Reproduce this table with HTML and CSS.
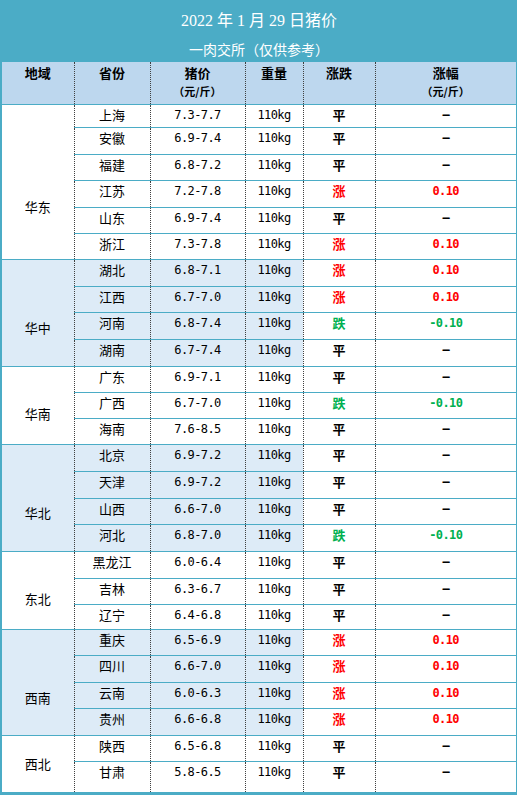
FILE: index.html
```html
<!DOCTYPE html>
<html lang="zh-CN">
<head>
<meta charset="utf-8">
<title>2022年1月29日猪价</title>
<link rel="stylesheet" href="styles.css">
</head>
<body>
<div class="sheet">
  <div class="title">
    <div class="t1">2022 年 1 月 29 日猪价</div>
    <div class="t2">一肉交所（仅供参考）</div>
  </div>
  <table class="grid">
    <colgroup>
      <col class="c-region"><col class="c-prov"><col class="c-price"><col class="c-weight"><col class="c-trend"><col class="c-change">
    </colgroup>
    <thead>
      <tr class="head">
        <th>地域</th>
        <th>省份</th>
        <th>猪价<span class="unit">（元/斤）</span></th>
        <th>重量</th>
        <th>涨跌</th>
        <th>涨幅<span class="unit">（元/斤）</span></th>
      </tr>
    </thead>
    <tbody>
      <tr class="h23">
        <td class="region g6" rowspan="6">华东</td>
        <td class="prov">上海</td><td class="num">7.3-7.7</td><td class="num">110kg</td><td class="trend">平</td><td class="chg">–</td>
      </tr>
      <tr class="h27"><td class="prov">安徽</td><td class="num">6.9-7.4</td><td class="num">110kg</td><td class="trend">平</td><td class="chg">–</td></tr>
      <tr class="h26"><td class="prov">福建</td><td class="num">6.8-7.2</td><td class="num">110kg</td><td class="trend">平</td><td class="chg">–</td></tr>
      <tr class="h27"><td class="prov">江苏</td><td class="num">7.2-7.8</td><td class="num">110kg</td><td class="trend up">涨</td><td class="chg up">0.10</td></tr>
      <tr class="h26"><td class="prov">山东</td><td class="num">6.9-7.4</td><td class="num">110kg</td><td class="trend">平</td><td class="chg">–</td></tr>
      <tr class="h26"><td class="prov">浙江</td><td class="num">7.3-7.8</td><td class="num">110kg</td><td class="trend up">涨</td><td class="chg up">0.10</td></tr>

      <tr class="h27 alt">
        <td class="region g4" rowspan="4">华中</td>
        <td class="prov">湖北</td><td class="num">6.8-7.1</td><td class="num">110kg</td><td class="trend up">涨</td><td class="chg up">0.10</td>
      </tr>
      <tr class="h26 alt"><td class="prov">江西</td><td class="num">6.7-7.0</td><td class="num">110kg</td><td class="trend up">涨</td><td class="chg up">0.10</td></tr>
      <tr class="h27 alt"><td class="prov">河南</td><td class="num">6.8-7.4</td><td class="num">110kg</td><td class="trend down">跌</td><td class="chg down">-0.10</td></tr>
      <tr class="h27 alt"><td class="prov">湖南</td><td class="num">6.7-7.4</td><td class="num">110kg</td><td class="trend">平</td><td class="chg">–</td></tr>

      <tr class="h26">
        <td class="region g3" rowspan="3">华南</td>
        <td class="prov">广东</td><td class="num">6.9-7.1</td><td class="num">110kg</td><td class="trend">平</td><td class="chg">–</td>
      </tr>
      <tr class="h26"><td class="prov">广西</td><td class="num">6.7-7.0</td><td class="num">110kg</td><td class="trend down">跌</td><td class="chg down">-0.10</td></tr>
      <tr class="h26"><td class="prov">海南</td><td class="num">7.6-8.5</td><td class="num">110kg</td><td class="trend">平</td><td class="chg">–</td></tr>

      <tr class="h27 alt">
        <td class="region g4" rowspan="4">华北</td>
        <td class="prov">北京</td><td class="num">6.9-7.2</td><td class="num">110kg</td><td class="trend">平</td><td class="chg">–</td>
      </tr>
      <tr class="h27 alt"><td class="prov">天津</td><td class="num">6.9-7.2</td><td class="num">110kg</td><td class="trend">平</td><td class="chg">–</td></tr>
      <tr class="h26 alt"><td class="prov">山西</td><td class="num">6.6-7.0</td><td class="num">110kg</td><td class="trend">平</td><td class="chg">–</td></tr>
      <tr class="h27 alt"><td class="prov">河北</td><td class="num">6.8-7.0</td><td class="num">110kg</td><td class="trend down">跌</td><td class="chg down">-0.10</td></tr>

      <tr class="h27">
        <td class="region g3" rowspan="3">东北</td>
        <td class="prov">黑龙江</td><td class="num">6.0-6.4</td><td class="num">110kg</td><td class="trend">平</td><td class="chg">–</td>
      </tr>
      <tr class="h26"><td class="prov">吉林</td><td class="num">6.3-6.7</td><td class="num">110kg</td><td class="trend">平</td><td class="chg">–</td></tr>
      <tr class="h25"><td class="prov">辽宁</td><td class="num">6.4-6.8</td><td class="num">110kg</td><td class="trend">平</td><td class="chg">–</td></tr>

      <tr class="h26 alt">
        <td class="region g4" rowspan="4">西南</td>
        <td class="prov">重庆</td><td class="num">6.5-6.9</td><td class="num">110kg</td><td class="trend up">涨</td><td class="chg up">0.10</td>
      </tr>
      <tr class="h27 alt"><td class="prov">四川</td><td class="num">6.6-7.0</td><td class="num">110kg</td><td class="trend up">涨</td><td class="chg up">0.10</td></tr>
      <tr class="h26 alt"><td class="prov">云南</td><td class="num">6.0-6.3</td><td class="num">110kg</td><td class="trend up">涨</td><td class="chg up">0.10</td></tr>
      <tr class="h27 alt"><td class="prov">贵州</td><td class="num">6.6-6.8</td><td class="num">110kg</td><td class="trend up">涨</td><td class="chg up">0.10</td></tr>

      <tr class="h26">
        <td class="region g2" rowspan="2">西北</td>
        <td class="prov">陕西</td><td class="num">6.5-6.8</td><td class="num">110kg</td><td class="trend">平</td><td class="chg">–</td>
      </tr>
      <tr class="h31"><td class="prov">甘肃</td><td class="num">5.8-6.5</td><td class="num">110kg</td><td class="trend">平</td><td class="chg">–</td></tr>
    </tbody>
  </table>
</div>
</body>
</html>
```

FILE: styles.css
```css
html, body {
  margin: 0;
  padding: 0;
  background: #ffffff;
}

.sheet {
  width: 514px;
  border-left: 2px solid #4bacc6;
  border-right: 1px solid #4bacc6;
  border-bottom: 2px solid #4bacc6;
  font-family: "Noto Sans CJK SC", "Noto Sans", sans-serif;
  color: #000000;
}

.title {
  height: 62px;
  background: #4bacc6;
  color: #ffffff;
  text-align: center;
  display: flex;
  flex-direction: column;
  align-items: center;
  padding-top: 11px;
  box-sizing: border-box;
}

.t1 {
  font-family: "Liberation Serif", "Noto Sans CJK SC", serif;
  font-size: 16px;
  line-height: 20px;
}

.t2 {
  font-size: 14px;
  line-height: 20px;
  margin-top: 8px;
}

.grid {
  width: 514px;
  border-collapse: collapse;
  table-layout: fixed;
}

.c-region { width: 72px; }
.c-prov { width: 76px; }
.c-price { width: 95px; }
.c-weight { width: 58px; }
.c-trend { width: 72px; }
.c-change { width: 141px; }

.grid th,
.grid td {
  padding: 0;
  text-align: center;
  vertical-align: top;
  border-left: 1px dotted #404040;
  border-right: 1px dotted #404040;
  border-bottom: 1px solid #4bacc6;
  font-size: 13px;
  line-height: 20px;
  white-space: nowrap;
}

.grid th:first-child,
.grid td.region {
  border-left: none;
}

.grid th:last-child,
.grid td.chg {
  border-right: none;
}

.head {
  height: 42px;
}

.head th {
  background: #bdd7ee;
  font-weight: bold;
  padding-top: 1px;
}

.unit {
  display: block;
  font-size: 11px;
  line-height: 17px;
}

.h23 { height: 23px; }
.h25 { height: 25px; }
.h26 { height: 26px; }
.h27 { height: 27px; }
.h31 { height: 31px; }

.alt .region,
.alt .prov,
.alt .num {
  background: #ddebf7;
}

.grid .region.g6 { padding-top: 92px; }
.grid .region.g4 { padding-top: 58px; }
.grid .region.g3 { padding-top: 37px; }
.grid .region.g2 { padding-top: 18px; }

.grid .num {
  font-family: "DejaVu Sans Mono", "Liberation Mono", monospace;
  font-size: 12px;
  letter-spacing: -0.6px;
}

.grid .trend {
  font-weight: bold;
}

.grid .chg {
  font-family: "DejaVu Sans Mono", "Liberation Mono", monospace;
  font-size: 12px;
  letter-spacing: -0.6px;
  font-weight: bold;
}

.up {
  color: #ff0000;
}

.down {
  color: #00b050;
}
```
